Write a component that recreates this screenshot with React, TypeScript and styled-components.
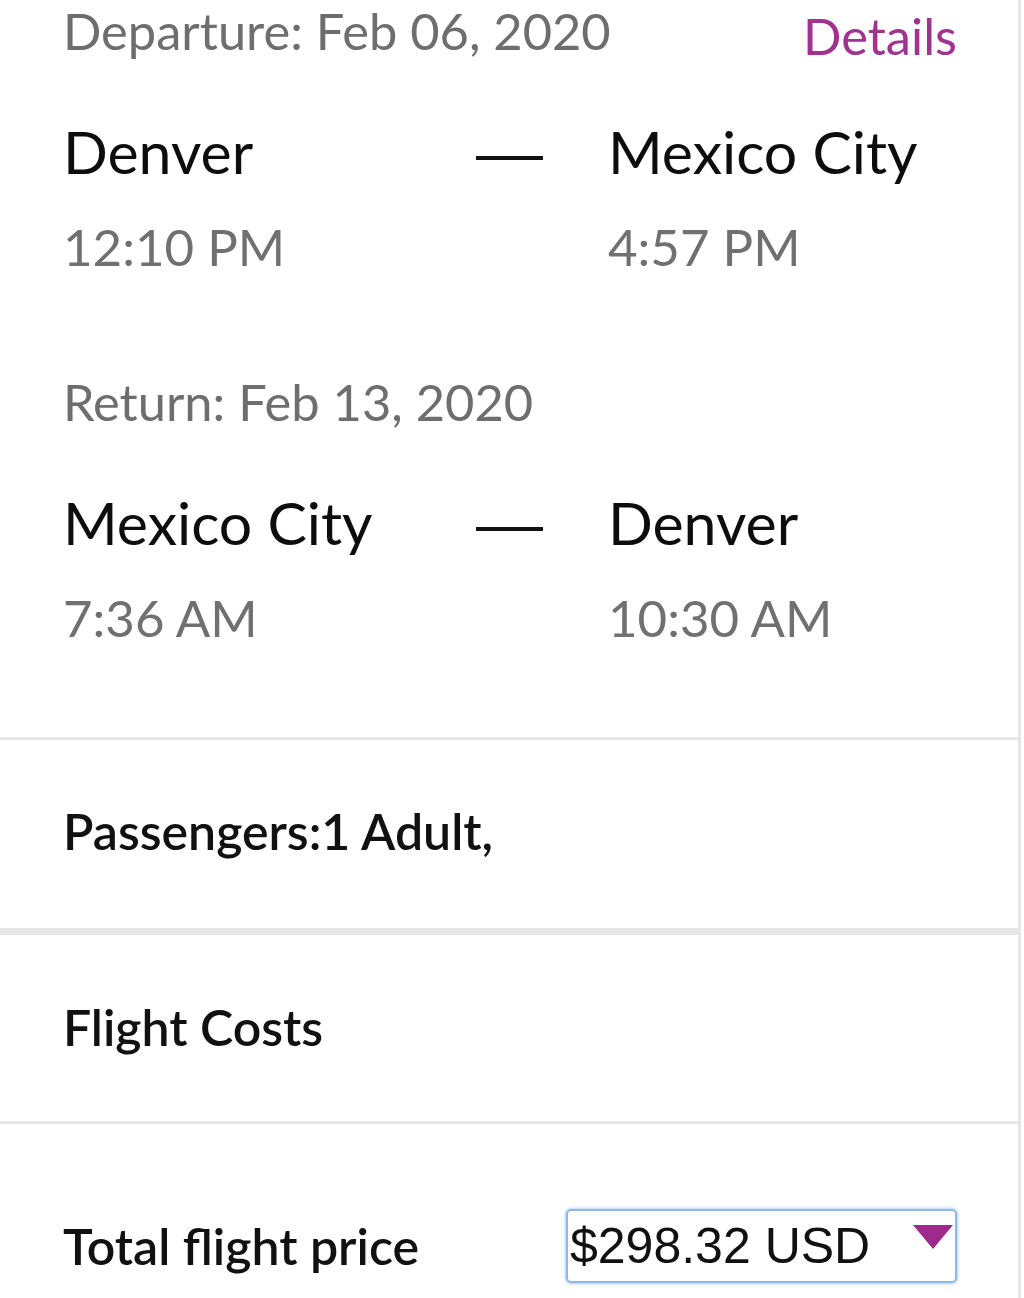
import React from 'react'
import styled, {createGlobalStyle} from 'styled-components';

const GlobalStyle = createGlobalStyle`
    html, body {
        margin: 0;
        padding: 0;
        background: #fff;
    }
    body {
        font-family: Lato, "Open Sans", sans-serif;
        color: #111;
    }
`;

const Panel = styled.div`
    width: 1018px;
    border-right: 3px solid #e6e6e6;
    background: #fff;
    min-height: 1298px;
`;

const Section = styled.section<{top: number, bottom: number}>`
    padding: ${p => p.top}px 61px ${p => p.bottom}px 63px;
`;

const Divider = styled.div<{size: number}>`
    height: ${p => p.size}px;
    background: #e6e6e6;
`;

const HeaderRow = styled.div`
    display: flex;
    justify-content: space-between;
    align-items: flex-start;
`;

const DateLabel = styled.div<{gap?: number}>`
    font-size: 50.6px;
    line-height: 1.2;
    color: #6e6e6e;
    margin-top: ${p => p.gap || 0}px;
`;

const DetailsLink = styled.a`
    font-size: 50.6px;
    line-height: 1.2;
    color: #a0338f;
    text-decoration: none;
    margin-top: 5px;
    cursor: pointer;
`;

const Route = styled.div<{gap: number}>`
    display: grid;
    grid-template-columns: 413px 132px 1fr;
    margin-top: ${p => p.gap}px;
`;

const City = styled.div`
    font-size: 59px;
    line-height: 1.2;
    color: #0d0d0d;
`;

const Dash = styled.div`
    width: 67px;
    height: 4px;
    background: #111;
    margin-top: 39px;
`;

const Time = styled.div`
    font-size: 51px;
    line-height: 1.2;
    color: #707070;
    margin-top: 28px;
`;

const Label = styled.div`
    font-size: 50px;
    line-height: 1.2;
    font-weight: 600;
    color: #111;
`;

const TotalRow = styled.div`
    display: flex;
    align-items: center;
    justify-content: space-between;
`;

const PriceSelect = styled.div`
    box-sizing: border-box;
    width: 391px;
    height: 74px;
    display: flex;
    align-items: center;
    justify-content: space-between;
    padding: 0 2px 0 2px;
    border: 2px solid #8db6ee;
    border-radius: 5px;
    box-shadow: 0 0 3px 1px rgba(120, 170, 240, 0.55);
    font-family: "Liberation Sans", Arial, sans-serif;
    font-size: 50px;
    color: #111;
    cursor: pointer;
`;

const Caret = styled.span`
    width: 0;
    height: 0;
    border-left: 20px solid transparent;
    border-right: 20px solid transparent;
    border-top: 24px solid #9c2b8c;
    margin-top: -18px;
`;

type Leg = {from: string, to: string, dep: string, arr: string};

function RouteRow({leg, gap}: {leg: Leg, gap: number}) {
    return (
        <Route gap={gap}>
            <div>
                <City>{leg.from}</City>
                <Time>{leg.dep}</Time>
            </div>
            <Dash />
            <div>
                <City>{leg.to}</City>
                <Time>{leg.arr}</Time>
            </div>
        </Route>
    )
}

export default function App() {
    const out = {from: 'Denver', to: 'Mexico City', dep: '12:10 PM', arr: '4:57 PM'};
    const back = {from: 'Mexico City', to: 'Denver', dep: '7:36 AM', arr: '10:30 AM'};

    return (
        <Panel>
            <GlobalStyle />
            <Section top={1} bottom={89}>
                <HeaderRow>
                    <DateLabel>Departure: Feb 06, 2020</DateLabel>
                    <DetailsLink>Details</DetailsLink>
                </HeaderRow>
                <RouteRow leg={out} gap={50} />
                <DateLabel gap={95}>Return: Feb 13, 2020</DateLabel>
                <RouteRow leg={back} gap={56} />
            </Section>
            <Divider size={3} />
            <Section top={61} bottom={67}>
                <Label>Passengers:1 Adult,</Label>
            </Section>
            <Divider size={7} />
            <Section top={62} bottom={64}>
                <Label>Flight Costs</Label>
            </Section>
            <Divider size={3} />
            <Section top={85} bottom={16}>
                <TotalRow>
                    <Label>Total flight price</Label>
                    <PriceSelect>
                        <span>$298.32 USD</span>
                        <Caret />
                    </PriceSelect>
                </TotalRow>
            </Section>
        </Panel>
    )
}
